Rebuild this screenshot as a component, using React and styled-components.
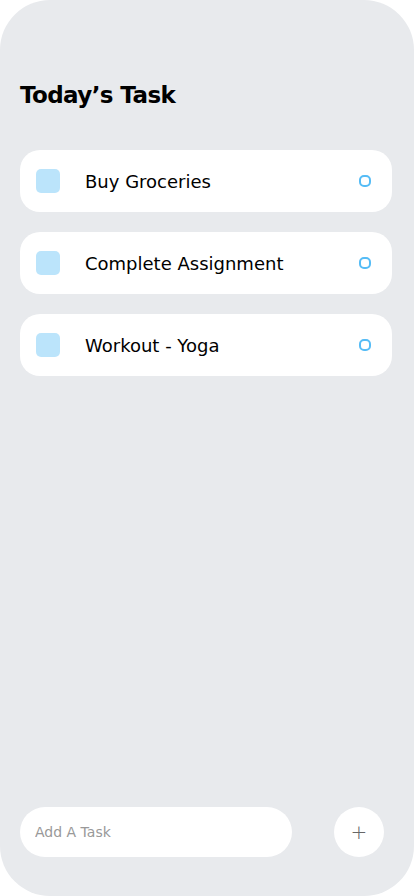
import styled, { createGlobalStyle } from "styled-components";

const GlobalStyle = createGlobalStyle`
  html, body {
    margin: 0;
    padding: 0;
    background: #ffffff;
  }
  * {
    box-sizing: border-box;
  }
`;

const tasks = ["Buy Groceries", "Complete Assignment", "Workout - Yoga"];

const App = () => {
  return (
    <>
      <GlobalStyle />
      <Screen>
        <Title>Today’s Task</Title>
        <TaskList>
          {tasks.map((task) => (
            <TaskCard key={task}>
              <ItemLeft>
                <Square />
                <TaskText>{task}</TaskText>
              </ItemLeft>
              <Circular />
            </TaskCard>
          ))}
        </TaskList>
        <Footer>
          <TaskInput placeholder="Add A Task" />
          <AddButton type="button">+</AddButton>
        </Footer>
      </Screen>
    </>
  );
};

export default App;

const Screen = styled.div`
  width: 414px;
  height: 896px;
  background: #e8eaed;
  border-radius: 50px;
  display: flex;
  flex-direction: column;
  padding: 80px 22px 39px 20px;
  font-family: "DejaVu Sans", sans-serif;
  overflow: hidden;
`;

const Title = styled.h1`
  margin: 0;
  font-size: 23px;
  line-height: 30px;
  font-weight: 700;
  letter-spacing: -0.6px;
  color: #000;
`;

const TaskList = styled.div`
  margin-top: 40px;
  display: flex;
  flex-direction: column;
  gap: 20px;
`;

const TaskCard = styled.div`
  height: 62px;
  background: #fff;
  border-radius: 20px;
  display: flex;
  align-items: center;
  justify-content: space-between;
  padding: 0 21px 0 16px;
`;

const ItemLeft = styled.div`
  display: flex;
  align-items: center;
`;

const Square = styled.div`
  width: 24px;
  height: 24px;
  border-radius: 5px;
  background: #55bcf6;
  opacity: 0.4;
  margin-right: 25px;
`;

const TaskText = styled.span`
  font-size: 18px;
  color: #000;
`;

const Circular = styled.div`
  width: 12px;
  height: 12px;
  border: 2px solid #55bcf6;
  border-radius: 5px;
`;

const Footer = styled.div`
  margin-top: auto;
  display: flex;
  align-items: center;
  justify-content: space-between;
  padding-right: 8px;
`;

const TaskInput = styled.input`
  width: 272px;
  height: 50px;
  border: none;
  outline: none;
  border-radius: 25px;
  background: #fff;
  padding: 0 15px;
  font-family: inherit;
  font-size: 14px;
  color: #000;
  &::placeholder {
    color: #999;
  }
`;

const AddButton = styled.button`
  width: 50px;
  height: 50px;
  border: none;
  border-radius: 50%;
  background: #fff;
  color: #666;
  font-family: inherit;
  font-size: 20px;
  font-weight: 300;
  display: flex;
  align-items: center;
  justify-content: center;
  padding: 0;
  cursor: pointer;
`;
